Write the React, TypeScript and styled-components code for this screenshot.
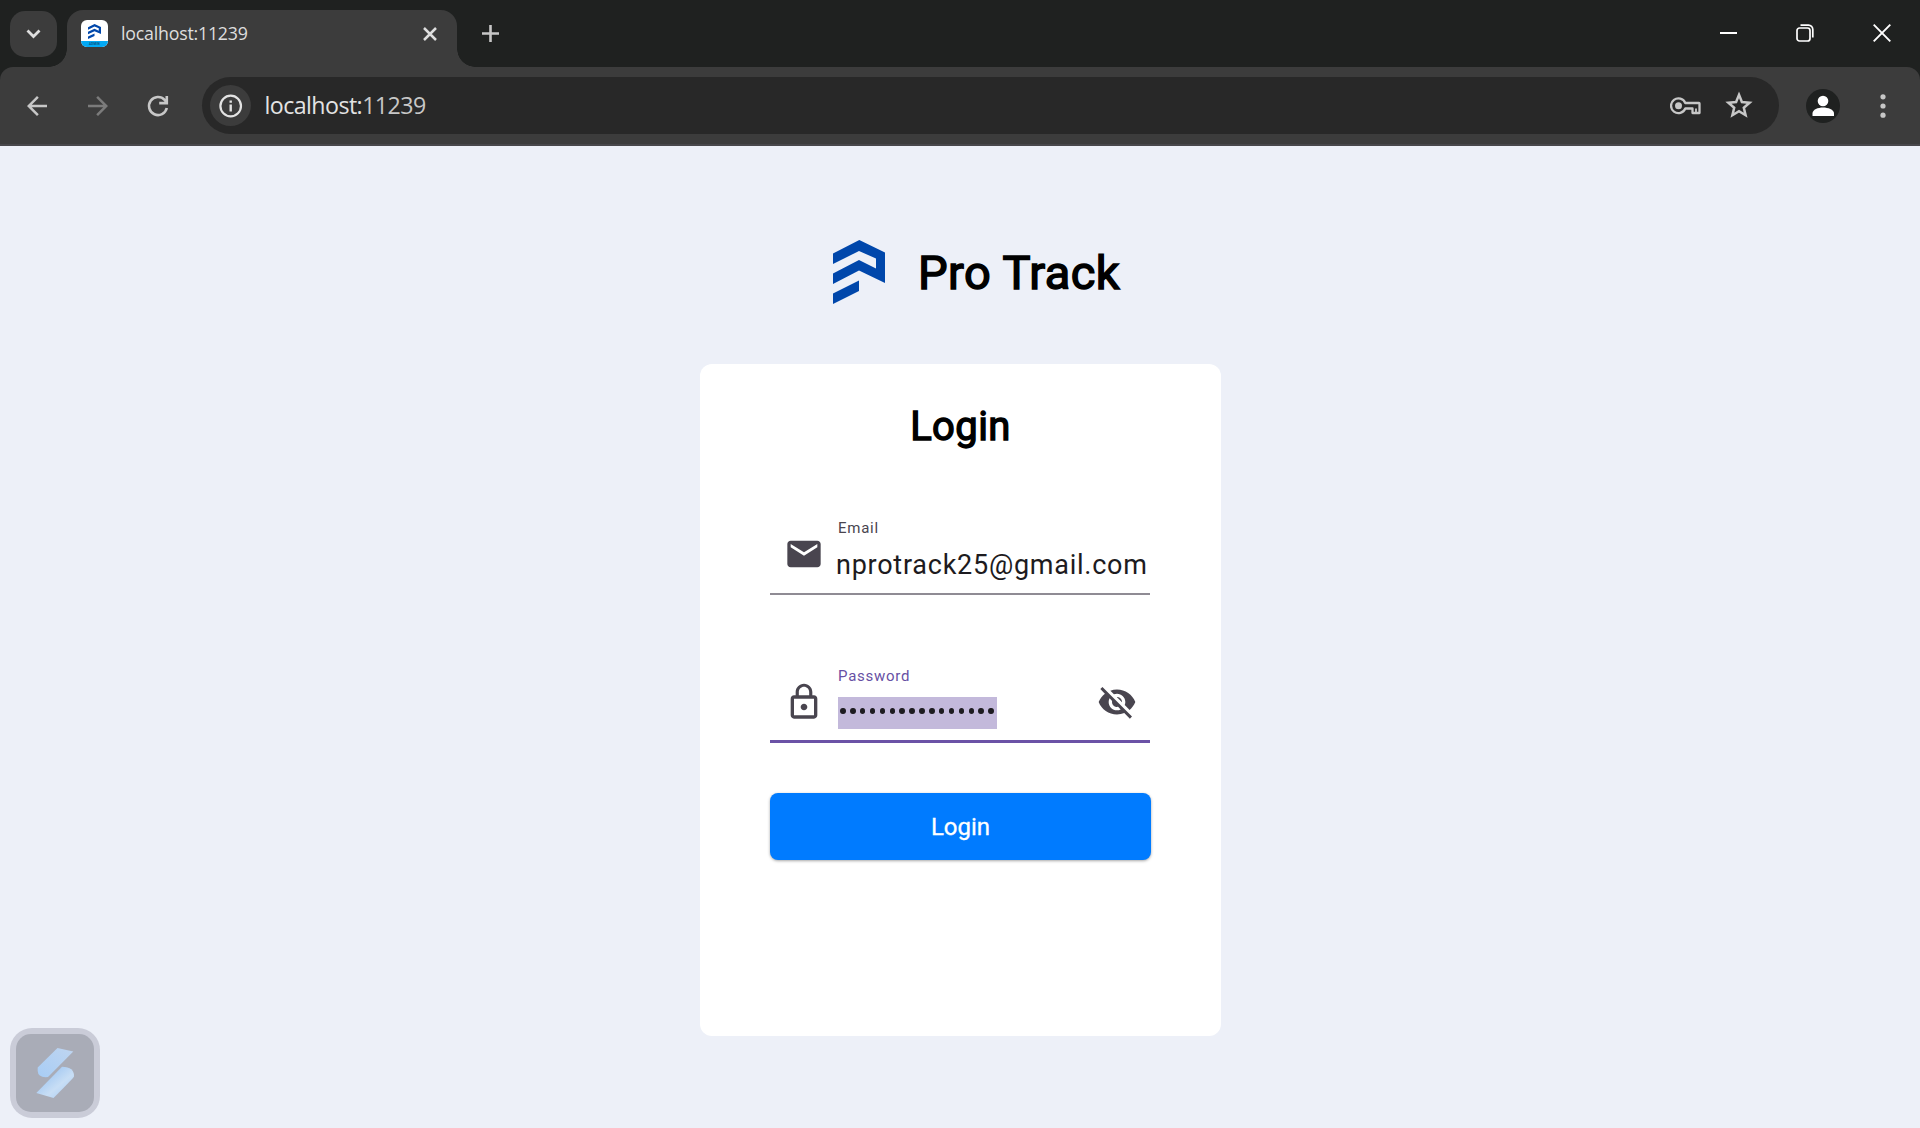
import React from "react";
import styled, { createGlobalStyle } from "styled-components";

const Global = createGlobalStyle`
  *, *::before, *::after { box-sizing: border-box; }
  body { margin: 0; background: #edf0f8; overflow: hidden; }
`;

const Window = styled.div`
  width: 1920px;
  height: 1128px;
  display: flex;
  flex-direction: column;
  background: #1f2120;
  font-family: Roboto, sans-serif;
`;

const TabStrip = styled.header`
  height: 67px;
  display: flex;
  align-items: flex-start;
  padding: 10px 0 0 10px;
  flex: none;
`;

const TabSearch = styled.div`
  width: 47px;
  height: 46px;
  margin-top: 1px;
  border-radius: 15px;
  background: #3c3c3c;
  display: grid;
  place-items: center;
`;

const Tab = styled.div`
  position: relative;
  width: 390px;
  height: 57px;
  margin-left: 10px;
  padding: 0 20px 10px 14px;
  border-radius: 16px 16px 0 0;
  background: #3c3c3c;
  display: flex;
  align-items: center;
  &::before, &::after {
    content: "";
    position: absolute;
    bottom: 0;
    width: 18px;
    height: 18px;
  }
  &::before {
    right: 100%;
    background: radial-gradient(circle at 0 0, transparent 17.5px, #3c3c3c 18px);
  }
  &::after {
    left: 100%;
    background: radial-gradient(circle at 100% 0, transparent 17.5px, #3c3c3c 18px);
  }
`;

const Favicon = styled.div`
  width: 27px;
  height: 27px;
  border-radius: 6px;
  overflow: hidden;
  background: #fff;
  display: flex;
  flex-direction: column;
  align-items: center;
  justify-content: space-between;
  padding-top: 4px;
`;

const FaviconBand = styled.div`
  width: 100%;
  height: 6px;
  background: #03a9f4;
  color: #0b4b78;
  font: 700 3px/6px Roboto, sans-serif;
  text-align: center;
  letter-spacing: 0.3px;
`;

const TabTitle = styled.span`
  flex: 1;
  margin-left: 13px;
  padding-bottom: 1px;
  color: #dedede;
  font: 400 17.8px/24px "Open Sans", sans-serif;
  letter-spacing: -0.22px;
`;

const NewTab = styled.div`
  width: 40px;
  height: 46px;
  margin-left: 13px;
  display: grid;
  place-items: center;
`;

const WindowControls = styled.div`
  margin-left: auto;
  display: flex;
  height: 46px;
`;

const ControlButton = styled.div<{ $wide?: number }>`
  width: ${(p) => p.$wide ?? 77}px;
  display: grid;
  place-items: center;
`;

const Toolbar = styled.nav`
  height: 79px;
  flex: none;
  display: flex;
  align-items: center;
  padding: 0 22px 0 22px;
  background: #3c3c3c;
  border-radius: 13px 13px 0 0;
  border-bottom: 2px solid #48474b;
`;

const NavButton = styled.div<{ $dim?: boolean }>`
  width: 30px;
  height: 30px;
  margin-right: 31px;
  color: ${(p) => (p.$dim ? "#7b7b7b" : "#c7c7c7")};
  svg { display: block; }
`;

const Omnibox = styled.div`
  width: 1577px;
  height: 57px;
  margin-left: -3px;
  border-radius: 29px;
  background: #282828;
  display: flex;
  align-items: center;
  padding: 0 23px 0 8px;
  color: #c7c7c7;
`;

const SiteInfo = styled.div`
  width: 41px;
  height: 41px;
  border-radius: 50%;
  background: #3c3c3c;
  display: grid;
  place-items: center;
`;

const Address = styled.span`
  flex: 1;
  margin-left: 13.5px;
  padding-bottom: 2px;
  color: #e3e3e3;
  font: 400 23.2px/30px "Open Sans", sans-serif;
  letter-spacing: -0.56px;
`;

const Port = styled.span`
  color: #c7c7c7;
`;

const OmniIcon = styled.div<{ $gap: number }>`
  margin-left: ${(p) => p.$gap}px;
  display: grid;
`;

const Avatar = styled.div`
  width: 34px;
  height: 34px;
  margin-left: 27px;
  border-radius: 50%;
  background: #1f2120;
`;

const Menu = styled.div`
  margin-left: auto;
  width: 33px;
  display: grid;
  justify-items: center;
  margin-right: -1px;
`;

const Page = styled.main`
  position: relative;
  flex: 1;
  background: #edf0f8;
  display: flex;
  flex-direction: column;
  align-items: center;
`;

const Brand = styled.div`
  height: 64px;
  margin: 94px 0 60px 33px;
  display: flex;
  align-items: center;
  gap: 33px;
`;

const BrandName = styled.h1`
  margin: 0;
  width: 202px;
  padding-top: 2px;
  white-space: nowrap;
  font: 400 47px/64px Roboto, sans-serif;
  letter-spacing: 0.45px;
  -webkit-text-stroke: 1.5px #000;
  color: #000;
`;

const Card = styled.section`
  width: 521px;
  height: 672px;
  padding: 0 70px;
  border-radius: 12px;
  background: #fff;
  display: flex;
  flex-direction: column;
`;

const CardTitle = styled.h2`
  margin: 39px 0 0 1px;
  height: 47px;
  text-align: center;
  font: 400 40px/48px Roboto, sans-serif;
  letter-spacing: 0.4px;
  -webkit-text-stroke: 1.4px #000;
  color: #000;
`;

const Field = styled.div<{ $focused?: boolean; $top: number }>`
  height: ${(p) => (p.$focused ? 89.5 : 89.5)}px;
  margin: ${(p) => p.$top}px 0.5px 0;
  display: flex;
  align-items: flex-start;
  color: #49454f;
  border-bottom: ${(p) => (p.$focused ? "3px solid #6b52a6" : "2px solid #8f8b94")};
`;

const FieldIcon = styled.div`
  width: 68px;
  padding: 29px 0 0 13.5px;
  svg { display: block; }
`;

const FieldBody = styled.div`
  flex: 1;
  min-width: 0;
`;

const FieldLabel = styled.label<{ $focused?: boolean }>`
  display: block;
  margin-top: 14px;
  font: 400 15px/18px Roboto, sans-serif;
  letter-spacing: 0.75px;
  color: ${(p) => (p.$focused ? "#6750a4" : "#49454f")};
`;

const FieldValue = styled.div`
  margin: 10px 0 0 -2px;
  font: 400 27px/36px Roboto, sans-serif;
  letter-spacing: 0.75px;
  color: #1d1b20;
  white-space: nowrap;
`;

const Selection = styled.div`
  width: 159px;
  height: 32px;
  margin-top: 12px;
  background: #c3b9db;
  display: flex;
  align-items: center;
  justify-content: space-around;
  padding: 0 1px 4px 0;
`;

const Dot = styled.span`
  width: 5.6px;
  height: 6px;
  border-radius: 50%;
  background: #1d1b20;
`;

const EyeToggle = styled.div`
  padding: 29px 13.5px 0 0;
  svg { display: block; }
`;

const Submit = styled.button`
  height: 67px;
  margin: 50px 0 0;
  padding: 1px 0 0 1px;
  border: 0;
  border-radius: 8px;
  background: #007bff;
  color: #fff;
  font: 400 24px/28px Roboto, sans-serif;
  -webkit-text-stroke: 0.3px #fff;
  box-shadow: 0 1px 3px rgba(0, 0, 0, 0.35);
`;

const Badge = styled.div`
  position: absolute;
  left: 10px;
  bottom: 10px;
  width: 90px;
  height: 90px;
  padding: 6px;
  border-radius: 22px;
  background: #caccd8;
`;

const BadgeFace = styled.div`
  width: 78px;
  height: 78px;
  border-radius: 15px;
  background: #a9acb7;
`;

const LogoMark = ({ width, height }: { width: number; height: number }) => (
  <svg width={width} height={height} viewBox="0 0 52 64" preserveAspectRatio="none" fill="#0047ab">
    <path d="M0 13.5 26.3 0 52 12.5V43L26 30.5 0 44V33.5L26 20 43 28.5V18.5L26 11 0 24Z" />
    <path d="M0 53.5 26 40.5V51L0 64Z" />
  </svg>
);

const Material = ({ d, size = 40 }: { d: string; size?: number }) => (
  <svg width={size} height={size} viewBox="0 0 24 24" fill="currentColor">
    <path d={d} />
  </svg>
);

const MAIL = "M20 4H4c-1.1 0-1.99.9-1.99 2L2 18c0 1.1.9 2 2 2h16c1.1 0 2-.9 2-2V6c0-1.1-.9-2-2-2zm0 4l-8 5-8-5V6l8 5 8-5v2z";
const LOCK = "M12 17c1.1 0 2-.9 2-2s-.9-2-2-2-2 .9-2 2 .9 2 2 2zm6-9h-1V6c0-2.76-2.24-5-5-5S7 3.24 7 6v2H6c-1.1 0-2 .9-2 2v10c0 1.1.9 2 2 2h12c1.1 0 2-.9 2-2V10c0-1.1-.9-2-2-2zM8.9 6c0-1.71 1.39-3.1 3.1-3.1s3.1 1.39 3.1 3.1v2H8.9V6zM18 20H6V10h12v10z";
const EYE_OFF = "M12 7c2.76 0 5 2.24 5 5 0 .65-.13 1.26-.36 1.83l2.92 2.92c1.51-1.26 2.7-2.89 3.43-4.75-1.73-4.39-6-7.5-11-7.5-1.4 0-2.74.25-3.98.7l2.16 2.16C10.74 7.13 11.35 7 12 7zM2 4.27l2.28 2.28.46.46C3.08 8.3 1.78 10.02 1 12c1.73 4.39 6 7.5 11 7.5 1.55 0 3.03-.3 4.38-.84l.42.42L19.73 22 21 20.73 3.27 3 2 4.27zM7.53 9.8l1.55 1.55c-.05.21-.08.43-.08.65 0 1.66 1.34 3 3 3 .22 0 .44-.03.65-.08l1.55 1.55c-.67.33-1.41.53-2.2.53-2.76 0-5-2.24-5-5 0-.79.2-1.53.53-2.2zm4.31-.78l3.15 3.15.02-.16c0-1.66-1.34-3-3-3l-.17.01z";
const BACK = "M20 11H7.83l5.59-5.59L12 4l-8 8 8 8 1.41-1.41L7.83 13H20v-2z";
const FORWARD = "M12 4l-1.41 1.41L16.17 11H4v2h12.17l-5.58 5.59L12 20l8-8z";

export default function App() {
  return (
    <Window>
      <Global />
      <TabStrip>
        <TabSearch>
          <svg width="16" height="10" viewBox="0 0 16 10" fill="none" stroke="#dedede" strokeWidth="2.8">
            <path d="M1.5 1.5 7.5 7.5 13.5 1.5" />
          </svg>
        </TabSearch>
        <Tab>
          <Favicon>
            <LogoMark width={13} height={15} />
            <FaviconBand>ADMIN</FaviconBand>
          </Favicon>
          <TabTitle>localhost:11239</TabTitle>
          <svg width="14" height="14" viewBox="0 0 14 14" stroke="#dedede" strokeWidth="2.5">
            <path d="M1 1 13 13M13 1 1 13" />
          </svg>
        </Tab>
        <NewTab>
          <svg width="17" height="17" viewBox="0 0 17 17" stroke="#c7c7c7" strokeWidth="2.6">
            <path d="M8.5 0V17M0 8.5H17" />
          </svg>
        </NewTab>
        <WindowControls>
          <ControlButton>
            <svg width="17" height="17" viewBox="0 0 17 17" stroke="#fff" strokeWidth="2">
              <path d="M0 8H17" />
            </svg>
          </ControlButton>
          <ControlButton $wide={76}>
            <svg width="18" height="18" viewBox="0 0 18 18" fill="none" stroke="#fff" strokeWidth="1.7">
              <rect x="1" y="4" width="13" height="13" rx="2.5" />
              <path d="M4.5 1.2H12.5A4.3 4.3 0 0 1 16.8 5.5V13.5" />
            </svg>
          </ControlButton>
          <ControlButton $wide={77}>
            <svg width="18" height="18" viewBox="0 0 18 18" stroke="#fff" strokeWidth="1.9">
              <path d="M.7 .7 17.3 17.3M17.3 .7 .7 17.3" />
            </svg>
          </ControlButton>
        </WindowControls>
      </TabStrip>
      <Toolbar>
        <NavButton><Material d={BACK} size={30} /></NavButton>
        <NavButton $dim><Material d={FORWARD} size={30} /></NavButton>
        <NavButton>
          <svg width="30" height="30" viewBox="0 0 30 30" fill="none" stroke="currentColor" strokeWidth="2.6">
            <path d="M22.8 17A9 9 0 1 1 20.6 8.9L22.8 11.3M22.8 5V12.1H15.2" />
          </svg>
        </NavButton>
        <Omnibox>
          <SiteInfo>
            <svg width="24" height="24" viewBox="0 0 24 24" fill="none" stroke="#e3e3e3" strokeWidth="2.2">
              <circle cx="11.7" cy="12" r="10.3" />
              <path d="M11.7 10.5V17.5M11.7 6.5V8.8" strokeWidth="2.4" />
            </svg>
          </SiteInfo>
          <Address>localhost:<Port>11239</Port></Address>
          <OmniIcon $gap={0}>
            <svg width="31" height="18" viewBox="0 0 31 18" fill="none" stroke="currentColor" strokeWidth="2.3">
              <path d="M15.3 6A7.4 7.4 0 1 0 15.3 11.5H22.5V16H29.5V6.5Q29.5 6 29 6Z" strokeLinejoin="round" />
              <circle cx="8.5" cy="8.7" r="3.5" fill="currentColor" stroke="none" />
              <path d="M26 16V11.5" strokeWidth="1.8" />
            </svg>
          </OmniIcon>
          <OmniIcon $gap={21}>
            <svg width="34" height="34" viewBox="0 0 34 34" fill="none" stroke="currentColor" strokeWidth="2.5">
              <path d="M17 5.8 19.9 13 27.6 13.7 21.8 18.7 23.6 26.200 17 22.200 10.400 26.200 12.200 18.7 6.400 13.7 14.1 13Z" />
            </svg>
          </OmniIcon>
        </Omnibox>
        <Avatar>
          <svg width="34" height="34" viewBox="0 0 34 34" fill="#fff">
            <circle cx="17" cy="12" r="5.3" />
            <path d="M6.5 27V24.5C6.5 20.5 12 18.5 17 18.5S28 20.5 28 24.5V27Z" />
          </svg>
        </Avatar>
        <Menu>
          <svg width="6" height="24" viewBox="0 0 6 24" fill="#c7c7c7">
            <circle cx="3" cy="2.8" r="2.6" />
            <circle cx="3" cy="12" r="2.6" />
            <circle cx="3" cy="21.2" r="2.6" />
          </svg>
        </Menu>
      </Toolbar>
      <Page>
        <Brand>
          <LogoMark width={52} height={64} />
          <BrandName>Pro Track</BrandName>
        </Brand>
        <Card>
          <CardTitle>Login</CardTitle>
          <Field $top={55}>
            <FieldIcon><Material d={MAIL} /></FieldIcon>
            <FieldBody>
              <FieldLabel>Email</FieldLabel>
              <FieldValue>nprotrack25@gmail.com</FieldValue>
            </FieldBody>
          </Field>
          <Field $focused $top={58.5}>
            <FieldIcon><Material d={LOCK} /></FieldIcon>
            <FieldBody>
              <FieldLabel $focused>Password</FieldLabel>
              <Selection>
                {Array.from({ length: 16 }, (_, i) => <Dot key={i} />)}
              </Selection>
            </FieldBody>
            <EyeToggle><Material d={EYE_OFF} /></EyeToggle>
          </Field>
          <Submit>Login</Submit>
        </Card>
        <Badge>
          <BadgeFace>
            <svg width="78" height="78" viewBox="16 1034 78 78">
              <defs>
                <linearGradient id="ribbon" x1="0" y1="1" x2="1" y2="0">
                  <stop offset="0" stopColor="#a8cdf5" />
                  <stop offset="1" stopColor="#bfd5f0" />
                </linearGradient>
                <linearGradient id="ribbonLow" x1="0" y1="0" x2="1" y2="1">
                  <stop offset="0.3" stopColor="#a8cbf2" />
                  <stop offset="0.6" stopColor="#c8def5" />
                  <stop offset="1" stopColor="#a5caf5" />
                </linearGradient>
              </defs>
              <path fill="url(#ribbon)" d="M57.5 1048 73.3 1051.5 48 1077Q38 1078 37.7 1071V1067.5Z" />
              <path fill="url(#ribbonLow)" d="M62 1066.7Q74.5 1067 74 1076.5 73.5 1078 53.5 1098L36.3 1093Z" />
            </svg>
          </BadgeFace>
        </Badge>
      </Page>
    </Window>
  );
}
